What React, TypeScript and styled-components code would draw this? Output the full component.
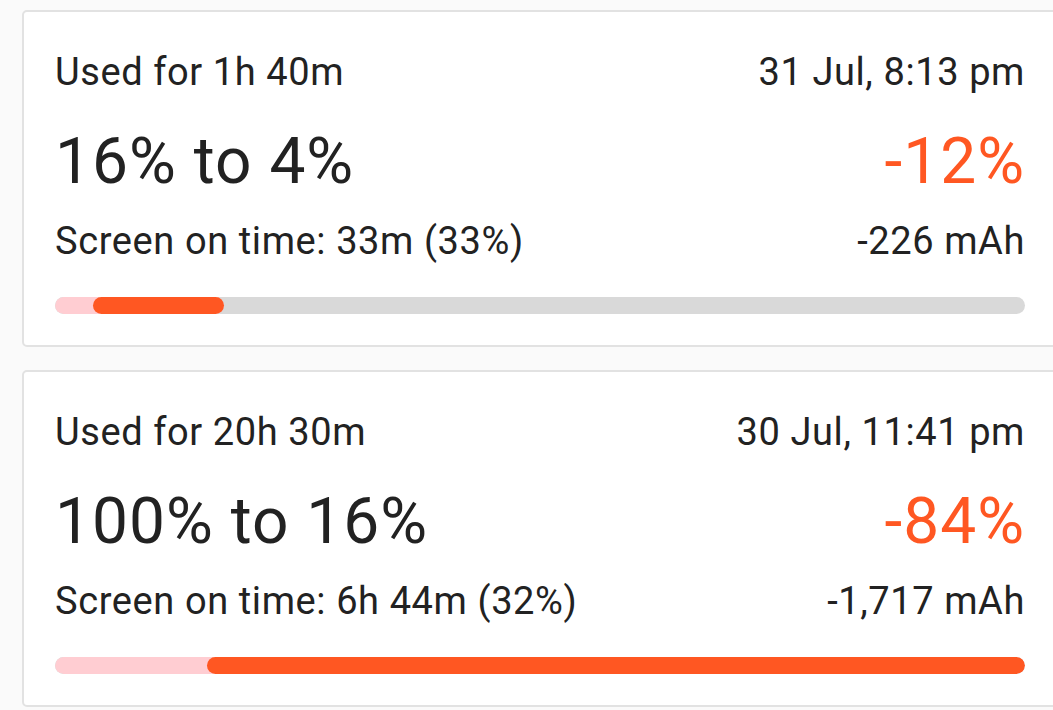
import React from "react";
import styled, { createGlobalStyle } from "styled-components";

const Global = createGlobalStyle`
  html, body {
    margin: 0;
    padding: 0;
    background: #fafafa;
    overflow: hidden;
  }
  body {
    font-family: Roboto, "Noto Sans", Arial, sans-serif;
    color: #212121;
  }
`;

const Page = styled.div`
  width: 1053px;
  height: 710px;
  overflow: hidden;
  box-sizing: border-box;
  padding: 10px 0 0 22px;
  display: flex;
  flex-direction: column;
  gap: 23px;
`;

const Card = styled.div`
  width: 1036px;
  flex: none;
  box-sizing: border-box;
  background: #ffffff;
  border: 2px solid #e2e2e2;
  border-radius: 5px;
  padding: 38px 31px 31px 31px;
  display: flex;
  flex-direction: column;
`;

const Row = styled.div<{ $mt?: number }>`
  display: flex;
  justify-content: space-between;
  align-items: baseline;
  margin-top: ${(p) => p.$mt ?? 0}px;
`;

const Small = styled.span`
  font-size: 38px;
  line-height: 44px;
  letter-spacing: 0.6px;
  color: #222222;
  white-space: nowrap;
`;

const Big = styled.span<{ $accent?: boolean }>`
  font-size: 64px;
  line-height: 76px;
  letter-spacing: 1px;
  color: ${(p) => (p.$accent ? "#ff5722" : "#222222")};
  white-space: nowrap;
`;

const Track = styled.div`
  position: relative;
  margin-top: 34px;
  height: 17px;
  border-radius: 9px;
  background: #d9d9d9;
  overflow: hidden;
`;

const Fill = styled.div<{ $color: string }>`
  position: absolute;
  top: 0;
  bottom: 0;
  border-radius: 9px;
  background: ${(p) => p.$color};
`;

type Session = {
  used: string;
  date: string;
  range: string;
  delta: string;
  screen: string;
  mah: string;
  start: number; // px within track
  end: number;
};

const sessions: Session[] = [
  {
    used: "Used for 1h 40m",
    date: "31 Jul, 8:13 pm",
    range: "16% to 4%",
    delta: "-12%",
    screen: "Screen on time: 33m (33%)",
    mah: "-226 mAh",
    start: 38,
    end: 169,
  },
  {
    used: "Used for 20h 30m",
    date: "30 Jul, 11:41 pm",
    range: "100% to 16%",
    delta: "-84%",
    screen: "Screen on time: 6h 44m (32%)",
    mah: "-1,717 mAh",
    start: 152,
    end: 970,
  },
];

function SessionCard({ s }: { s: Session }) {
  return (
    <Card>
      <Row>
        <Small>{s.used}</Small>
        <Small>{s.date}</Small>
      </Row>
      <Row $mt={30}>
        <Big>{s.range}</Big>
        <Big $accent>{s.delta}</Big>
      </Row>
      <Row $mt={19}>
        <Small>{s.screen}</Small>
        <Small>{s.mah}</Small>
      </Row>
      <Track>
        <Fill $color="#ffcdd2" style={{ left: 0, width: s.end }} />
        <Fill $color="#ff5722" style={{ left: s.start, width: s.end - s.start }} />
      </Track>
    </Card>
  );
}

export default function App() {
  return (
    <>
      <Global />
      <Page>
        {sessions.map((s) => (
          <SessionCard key={s.date} s={s} />
        ))}
      </Page>
    </>
  );
}
